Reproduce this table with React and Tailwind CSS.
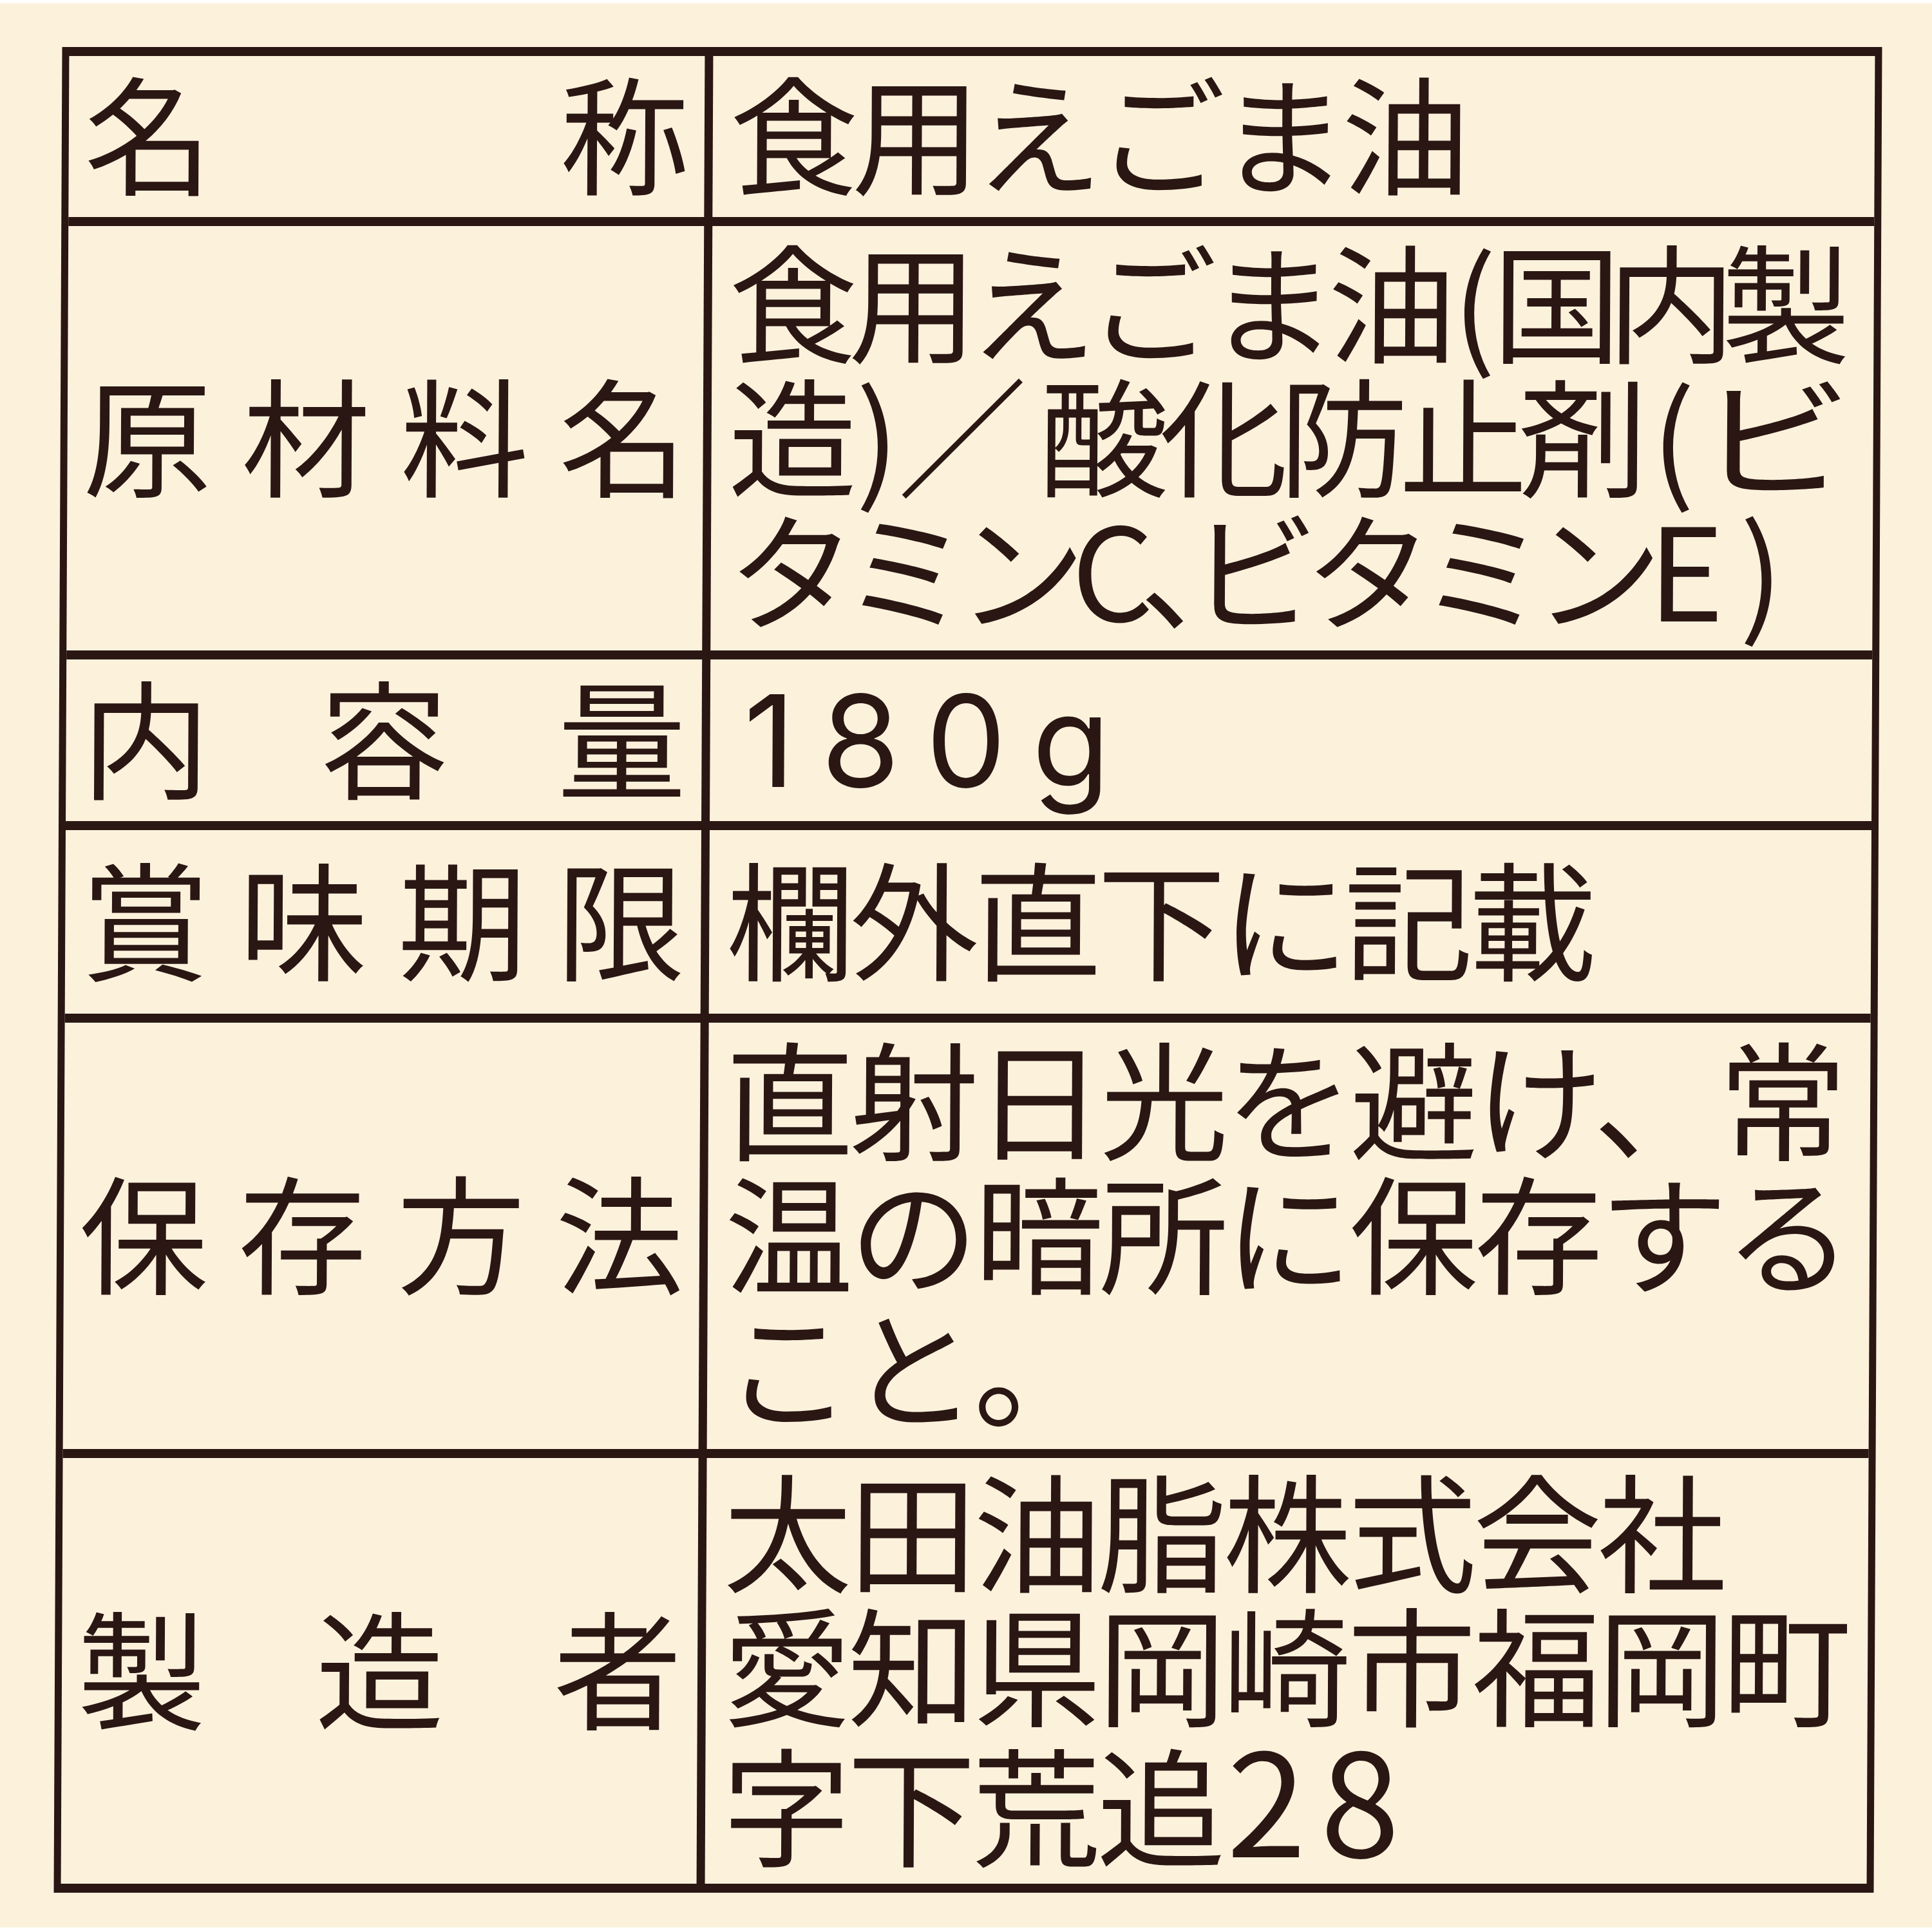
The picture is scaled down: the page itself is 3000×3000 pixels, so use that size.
const rows = [
  {
    label: ["名", "称"],
    height: "h-[264px] border-b-[14px]",
    lines: [{ text: "食用えごま油", cls: "tracking-[-10px]" }],
  },
  {
    label: ["原", "材", "料", "名"],
    height: "h-[673px] border-b-[14px]",
    lines: [
      {
        cls: "tracking-[-14px]",
        text: (
          <>
            食用えごま油<span className="mx-[8px]">(</span>
            <span className="tracking-[-22px]">国内製</span>
          </>
        ),
      },
      {
        cls: "tracking-[-14px]",
        text: (
          <>
            造<span className="mx-[12px]">)</span>
            <span className="mr-[34px]">／</span>酸化防止剤
            <span className="ml-[20px] mr-[18px]">(</span>
            <span className="inline-block scale-x-[1.2] origin-left">ビ</span>
          </>
        ),
      },
      {
        cls: "tracking-[-22px]",
        text: (
          <>
            タミンC<span className="mr-[-100px]">、</span>ビタミンE
            <span className="ml-[46px]">)</span>
          </>
        ),
      },
    ],
  },
  {
    label: ["内", "容", "量"],
    height: "h-[265px] border-b-[14px]",
    digits: true,
    lines: [{ text: "180g", cls: "" }],
  },
  {
    label: ["賞", "味", "期", "限"],
    height: "h-[299px] border-b-[14px]",
    lines: [{ text: "欄外直下に記載", cls: "tracking-[-8px]" }],
  },
  {
    label: ["保", "存", "方", "法"],
    height: "h-[676px] border-b-[14px]",
    lines: [
      { text: "直射日光を避け、常", cls: "tracking-[-6px]" },
      { text: "温の暗所に保存する", cls: "tracking-[-6px]" },
      { text: "こと。", cls: "tracking-[-6px]" },
    ],
  },
  {
    label: ["製", "造", "者"],
    height: "h-[661px]",
    lines: [
      { text: "太田油脂株式会社", cls: "tracking-[-6px]" },
      { text: "愛知県岡崎市福岡町", cls: "tracking-[-6px]" },
      {
        cls: "tracking-[-6px]",
        text: (
          <>
            字下荒追
            <span className="ml-[8px] text-[222px] tracking-[22px]">28</span>
          </>
        ),
      },
    ],
  },
];

export default function App() {
  return (
    <div className="w-[3000px] h-[3000px] flex flex-col bg-white font-['Noto_Sans_CJK_JP',sans-serif] text-[#2a1613]">
      <div className="h-[5px] shrink-0" />

      {/* LABEL AREA */}
      <div className="h-[2988px] shrink-0 bg-[#fcf2dc] pt-[68px] pl-[90px]">
        <div className="w-[2826px] flex flex-col border-x-[11px] border-y-[14px] border-solid border-[#2a1613] skew-x-[-0.26deg]">
          {rows.map((row, i) => (
            <div
              key={i}
              className={`flex shrink-0 border-solid border-[#2a1613] ${row.height}`}
            >
              {/* LABEL */}
              <div className="w-[987px] shrink-0 flex items-center justify-between px-[24px] pb-[22px] text-[200px] leading-none">
                {row.label.map((ch, j) => (
                  <span key={j}>{ch}</span>
                ))}
              </div>

              {/* VALUE */}
              <div className="flex-1 flex flex-col justify-center border-l-[13px] border-solid border-[#2a1613] pl-[26px] pb-[22px] text-[200px] leading-[208px] whitespace-nowrap">
                {row.lines.map((line, j) =>
                  row.digits ? (
                    <div
                      key={j}
                      className="pl-[26px] pt-[22px] font-['Inter',sans-serif] text-[198px] tracking-[40px]"
                    >
                      {line.text}
                    </div>
                  ) : (
                    <div key={j} className={line.cls}>
                      {line.text}
                    </div>
                  )
                )}
              </div>
            </div>
          ))}
        </div>
      </div>

      <div className="h-[7px] shrink-0" />
    </div>
  );
}
